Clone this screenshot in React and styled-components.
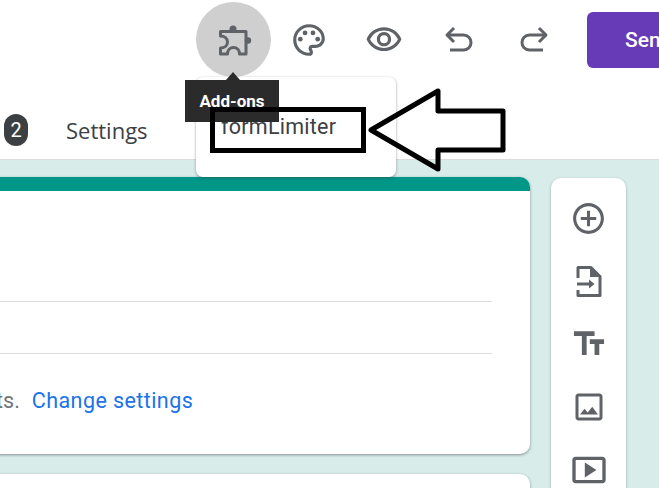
import React from "react";
import styled, { createGlobalStyle } from "styled-components";
import {
  MdOutlinePalette,
  MdOutlineVisibility,
  MdAddCircleOutline,
  MdTextFields,
  MdOutlineImage,
  MdOutlineSmartDisplay,
} from "react-icons/md";

const Global = createGlobalStyle`
  html, body { margin: 0; padding: 0; background: #fff; }
  body { font-family: Roboto, "Liberation Sans", sans-serif; }
`;

const Page = styled.div`
  position: relative;
  width: 659px;
  height: 488px;
  overflow: hidden;
  background: #d8edea;
`;

const Header = styled.header`
  height: 159px;
  background: #fff;
  border-bottom: 1px solid #dadce0;
  display: flex;
  flex-direction: column;
`;

const Toolbar = styled.div`
  height: 75px;
  margin-top: 2px;
  padding-left: 196px;
  display: flex;
  align-items: center;
  flex-shrink: 0;
`;

const IconButton = styled.button`
  width: 75px;
  height: 75px;
  flex-shrink: 0;
  border: 0;
  padding: 0;
  border-radius: 50%;
  display: flex;
  align-items: center;
  justify-content: center;
  color: #5f6368;
  background: ${(p) => (p.$active ? "#cfcfcf" : "transparent")};
`;

const SendButton = styled.button`
  margin-left: 16px;
  margin-top: 1px;
  width: 120px;
  height: 56px;
  flex-shrink: 0;
  border: 0;
  border-radius: 6px;
  background: #673ab7;
  color: #fff;
  font: 500 21px Roboto, sans-serif;
  text-align: left;
  padding: 0 0 0 38px;
`;

const Tabs = styled.nav`
  margin-top: 37px;
  padding-left: 4px;
  display: flex;
  align-items: center;
  height: 32px;
`;

const Badge = styled.span`
  width: 24px;
  height: 32px;
  border-radius: 12px;
  background: #3c4043;
  color: #fff;
  font-size: 20px;
  display: flex;
  align-items: center;
  justify-content: center;
`;

const Tab = styled.span`
  margin-left: 38px;
  font-size: 22px;
  font-family: "Open Sans", Roboto, sans-serif;
  color: #3c4043;
`;

const Canvas = styled.main`
  display: flex;
  gap: 21px;
  margin-left: -20px;
  padding-top: 17px;
`;

const Column = styled.div`
  width: 550px;
  flex-shrink: 0;
  display: flex;
  flex-direction: column;
  gap: 20px;
`;

const Card = styled.section`
  background: #fff;
  border-radius: 10px;
  box-shadow: 0 1px 3px rgba(60, 64, 67, 0.55);
  overflow: hidden;
`;

const CardAccent = styled.div`
  height: 14px;
  background: #009688;
`;

const CardBody = styled.div`
  height: 263px;
  padding: 0 38px 0 20px;
  display: flex;
  flex-direction: column;
`;

const Field = styled.div`
  height: ${(p) => p.$h}px;
  flex-shrink: 0;
  border-bottom: 1px solid #dadce0;
`;

const Note = styled.p`
  margin: 34px 0 0 -4px;
  font-size: 21.5px;
  line-height: 26px;
  color: #70757a;
  display: flex;
  gap: 12px;
`;

const NoteLink = styled.a`
  color: #1a73e8;
  letter-spacing: 0.42px;
`;

const EmptyCard = styled(Card)`
  height: 60px;
`;

const Rail = styled.aside`
  width: 75px;
  height: 340px;
  flex-shrink: 0;
  margin-top: 1px;
  background: #fff;
  border-radius: 10px;
  box-shadow: 0 1px 3px rgba(60, 64, 67, 0.4);
  display: flex;
  flex-direction: column;
  align-items: center;
  padding-top: 20px;
  box-sizing: border-box;
  gap: 23px;
  color: #5f6368;
`;

const RailIcon = styled.span`
  height: 40px;
  width: 40px;
  display: flex;
  align-items: center;
  justify-content: center;
`;

const Menu = styled.div`
  position: absolute;
  left: 196px;
  top: 77px;
  width: 200px;
  height: 100px;
  background: #fff;
  border-radius: 7px;
  box-shadow: 0 1px 3px rgba(60, 64, 67, 0.5);
`;

const MenuItem = styled.div`
  position: absolute;
  left: 25px;
  top: 36px;
  font-size: 21.5px;
  line-height: 28px;
  color: #3c4043;
  letter-spacing: 0.25px;
`;

const Tooltip = styled.div`
  position: absolute;
  left: 185px;
  top: 80px;
  width: 94px;
  height: 42px;
  background: #2b2b2b;
  color: #fff;
  font-size: 17px;
  font-weight: 700;
  display: flex;
  align-items: center;
  justify-content: center;
  &::before {
    content: "";
    position: absolute;
    left: 41px;
    top: -8px;
    border: 7px solid transparent;
    border-top: 0;
    border-bottom: 8px solid #2b2b2b;
  }
`;

const Highlight = styled.div`
  position: absolute;
  left: 210px;
  top: 107px;
  width: 156px;
  height: 46px;
  box-sizing: border-box;
  border: 5px solid #000;
`;

const ArrowSvg = styled.svg`
  position: absolute;
  left: 360px;
  top: 80px;
`;

const PuzzleIcon = () => (
  <svg width="44" height="44" viewBox="0 0 44 44" fill="none">
    <path
      d="M8.500 13.500H34V36H27.500C27.500 32 25 29.500 21.500 29.500S15.500 32 15.500 36H8.500V30C12.500 30 15.500 27.500 15.500 24S12.500 18 8.500 18Z"
      stroke="currentColor"
      strokeWidth="3"
      strokeLinejoin="round"
    />
    <circle cx="21" cy="11" r="3.500" fill="currentColor" />
    <circle cx="36" cy="22.500" r="3.200" fill="currentColor" />
  </svg>
);

const UndoIcon = ({ mirrored }) => (
  <svg
    width="40"
    height="40"
    viewBox="0 0 40 40"
    fill="none"
    stroke="currentColor"
    strokeWidth="3"
    style={mirrored ? { transform: "scaleX(-1)" } : undefined}
  >
    <path d="M15 8L8 15L15 22" strokeLinejoin="round" />
    <path d="M8 15H24.500C29 15 32 18.500 32 22.500S29 30 24.500 30H11" />
  </svg>
);

const FileImportIcon = () => (
  <svg width="40" height="40" viewBox="0 0 40 40" fill="none">
    <path
      d="M9 17V6.500H22L31 15.500V34.500H9V29"
      stroke="currentColor"
      strokeWidth="3"
      strokeLinejoin="round"
    />
    <path d="M21 5L32.500 16H21z" fill="currentColor" />
    <path d="M8 21.500H20V18.500L25.500 23L20 27.500V24.500H8z" fill="currentColor" />
  </svg>
);

export default function App() {
  return (
    <Page>
      <Global />
      <Header>
        <Toolbar>
          <IconButton $active aria-label="Add-ons">
            <PuzzleIcon />
          </IconButton>
          <IconButton aria-label="Customize theme">
            <MdOutlinePalette size={38} />
          </IconButton>
          <IconButton aria-label="Preview">
            <MdOutlineVisibility size={38} />
          </IconButton>
          <IconButton aria-label="Undo">
            <UndoIcon />
          </IconButton>
          <IconButton aria-label="Redo">
            <UndoIcon mirrored />
          </IconButton>
          <SendButton>Send</SendButton>
        </Toolbar>
        <Tabs>
          <Badge>2</Badge>
          <Tab>Settings</Tab>
        </Tabs>
      </Header>
      <Canvas>
        <Column>
          <Card>
            <CardAccent />
            <CardBody>
              <Field $h={110} />
              <Field $h={51} />
              <Note>
                <span>ts.</span>
                <NoteLink>Change settings</NoteLink>
              </Note>
            </CardBody>
          </Card>
          <EmptyCard />
        </Column>
        <Rail>
          <RailIcon><MdAddCircleOutline size={37} /></RailIcon>
          <RailIcon><FileImportIcon /></RailIcon>
          <RailIcon><MdTextFields size={38} /></RailIcon>
          <RailIcon><MdOutlineImage size={36} /></RailIcon>
          <RailIcon><MdOutlineSmartDisplay size={40} /></RailIcon>
        </Rail>
      </Canvas>
      <Menu>
        <MenuItem>formLimiter</MenuItem>
      </Menu>
      <Tooltip>Add-ons</Tooltip>
      <Highlight />
      <ArrowSvg width="150" height="95" viewBox="0 0 150 95" fill="none">
        <path
          d="M11 50 L78 11 V31 H143 V70 H78 V89 Z"
          stroke="#000"
          strokeWidth="5"
          strokeLinejoin="round"
        />
      </ArrowSvg>
    </Page>
  );
}
